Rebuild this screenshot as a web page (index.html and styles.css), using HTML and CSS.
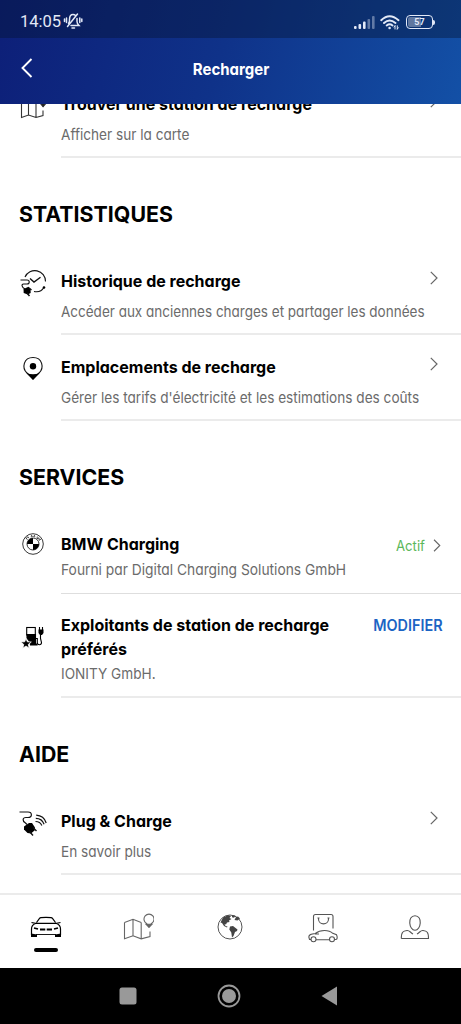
FILE: index.html
```html
<!DOCTYPE html>
<html lang="fr">
<head>
<meta charset="utf-8">
<title>Recharger</title>
<link rel="stylesheet" href="styles.css">
</head>
<body>
<div class="app">
  <header class="top">
    <div class="status">
      <span class="clock">14:05</span>
      <svg class="bell" width="20" height="18" viewBox="0 0 20 18" fill="none" stroke="currentColor" stroke-width="1.500" stroke-linecap="round">
        <path d="M5.500 11.500c.7-1 1-2 1-3V7.500C6.500 4 8 2.500 10 2.500c1 0 1.900.4 2.500 1M14 6.500v3c0 1.500.8 2.700 2 4H8M4.500 14.500L14.500 2M9 16h2.500M3.500 6v4.500M1.500 7v2.500M16.800 6v4.500M18.800 7v2.500"/>
      </svg>
      <span class="spacer"></span>
      <svg class="signal" width="21" height="13" viewBox="0 0 21 13" fill="currentColor">
        <rect x="0" y="10" width="2.600" height="3" rx="1"/><rect x="4.500" y="8" width="2.600" height="5" rx="1"/><rect x="9" y="5.500" width="2.600" height="7.500" rx="1"/>
        <g opacity=".4"><rect x="13.500" y="3" width="2.600" height="10" rx="1"/><rect x="18" y="0" width="2.600" height="13" rx="1"/></g>
      </svg>
      <svg class="wifi" width="20" height="15" viewBox="0 0 20 15" fill="none" stroke="currentColor" stroke-width="1.900" stroke-linecap="round">
        <path d="M1.200 5.200Q9.500-2.800 18.500 5.200M4 8Q9.500 2.800 15.500 8M6.700 10.500Q9.700 8.200 12.500 10.500"/>
        <circle cx="9.600" cy="13" r="1.300" fill="currentColor" stroke="none"/>
        <path stroke-width="1" d="M15 14v-3.200M14 12l1-1.200M17.300 10.800V14M17.300 14l1-1.200"/>
      </svg>
      <span class="battery"><span class="level">57</span></span><span class="nub"></span>
    </div>
    <div class="titlebar">
      <svg class="back" width="12" height="20" viewBox="0 0 12 20" fill="none" stroke="currentColor" stroke-width="1.900"><path d="M10.500 1L1.500 10l9 9"/></svg>
      <h1><span class="fit">Recharger</span></h1>
    </div>
  </header>

  <main class="content">
    <div class="list">
      <section class="row">
        <svg class="icon" width="30" height="30" viewBox="0 0 30 30" fill="none" stroke="#333" stroke-width="1.100">
          <path d="M3.500 8.500l7-2.500 7.500 2.500M3.500 8.500v18l7-2.500 7.500 2.500 7-2v-5M10.500 6V24M18 8.500v18"/><path d="M23 11a4 4 0 1 1 4 0l-2 4z"/><path fill="#111" d="M22.800 13h4.600l-2.300 2.700z"/>
        </svg>
        <div class="body"><div class="text"><h3><span class="fit">Trouver une station de recharge</span></h3><p><span class="fit">Afficher sur la carte</span></p></div>
        <svg class="chev" width="8" height="14" viewBox="0 0 8 14"><path d="M.800.800L7 7 .800 13.200"/></svg></div>
      </section>

      <h2><span class="fit">STATISTIQUES</span></h2>
      <section class="row">
        <svg class="icon" width="30" height="30" viewBox="0 0 30 30" fill="none" stroke="#111" stroke-width="1.100">
          <path d="M7 9A10.700 10.700 0 0 1 27.500 13.500M16 23.500c4.500 1 8-.8 9.800-4"/><path stroke-width="1.400" d="M12 10.500l4 3.500 6.500-4.700"/>
          <path d="M2.500 12H9c3 0 3 4 0 4H5.500c-2.300 0-2 3.500 1.500 5"/><path fill="#000" stroke="none" d="M5.500 21l5-2.200 2 2.200.2 4-3 1.500-4-1.500z"/><path stroke-width="1.500" d="M11 20l2.500 2M9 25l2.500 3"/><circle cx="26" cy="19.500" r="1.300" fill="#000" stroke="none"/>
        </svg>
        <div class="body"><div class="text"><h3><span class="fit">Historique de recharge</span></h3><p><span class="fit long">Accéder aux anciennes charges et partager les données</span></p></div>
        <svg class="chev" width="8" height="14" viewBox="0 0 8 14"><path d="M.800.800L7 7 .800 13.200"/></svg></div>
      </section>
      <section class="row">
        <svg class="icon" width="30" height="30" viewBox="0 0 30 30" fill="none" stroke="#111" stroke-width="1.100">
          <path d="M9 19C3.500 14 5.500 3.500 15 3.500S26.500 14 21 19l-6 6z"/><path fill="#000" stroke="none" d="M8.500 19q6.500 2.500 13 0L15 26z"/><circle cx="15" cy="12.300" r="3.200" fill="#000" stroke="none"/>
        </svg>
        <div class="body"><div class="text"><h3><span class="fit">Emplacements de recharge</span></h3><p><span class="fit">Gérer les tarifs d'électricité et les estimations des coûts</span></p></div>
        <svg class="chev" width="8" height="14" viewBox="0 0 8 14"><path d="M.800.800L7 7 .800 13.200"/></svg></div>
      </section>

      <h2><span class="fit">SERVICES</span></h2>
      <section class="row row-service">
        <svg class="icon" width="30" height="30" viewBox="0 0 30 30" fill="none" stroke="#222" stroke-width=".9">
          <circle cx="15" cy="15" r="10.300"/><circle cx="15" cy="15" r="6"/>
          <path fill="#000" stroke="none" d="M15 15V9a6 6 0 0 0-6 6zM15 15v6a6 6 0 0 0 6-6z"/>
          <path stroke-width=".8" d="M8 9.500l2-1.800.8 1.500M7.500 8.500l2 2.300M13.200 8.300l.3-2 1.500 1.500 1.500-1.500.3 2M19.300 7.500l-.3 2.300 2-1 .2 2.500 1.800-1.200"/>
        </svg>
        <div class="body"><div class="text"><h3><span class="fit">BMW Charging</span></h3><p><span class="fit wide">Fourni par Digital Charging Solutions GmbH</span></p></div>
        <div class="state"><span class="fit">Actif</span><svg width="8" height="13" viewBox="0 0 8 14"><path d="M.800.800L7 7 .800 13.200"/></svg></div></div>
      </section>
      <section class="row row-operators">
        <svg class="icon" width="30" height="30" viewBox="0 0 30 30" fill="none" stroke="#000" stroke-width="1.100">
          <rect x="8.700" y="5.500" width="8.600" height="7.500"/><path fill="#000" d="M9 12.500h8.500V22h1.500v1h-6.500l-.5-3-3-4z"/><path d="M18 16.500h1.300v4c0 3 4.200 3 4.200 0l-1-4V12"/><path fill="#000" stroke="none" d="M20.500 7.500h5V11l-1.500 2h-2l-1.500-2z"/><path d="M21.500 5v3M24.500 5v3"/>
          <path fill="#000" stroke="#fff" stroke-width=".8" d="M8 16.500l1.300 3.300 4 .2-3.100 2.500 1.100 3.700L8 24l-3.300 2.200 1.100-3.700L2.700 20l4-.2z"/>
        </svg>
        <div class="body"><div class="text"><h3><span class="fit">Exploitants de station de recharge<br>préférés</span></h3><p><span class="fit">IONITY GmbH.</span></p></div>
        <span class="action"><span class="fit">MODIFIER</span></span></div>
      </section>

      <h2><span class="fit">AIDE</span></h2>
      <section class="row">
        <svg class="icon" width="30" height="30" viewBox="0 0 30 30" fill="none" stroke="#111" stroke-width="1.200">
          <path d="M1.500 4H10c4.500 0 4.500 5.500 0 5.500H8c-3.500 0-4 3.500-.5 5.500l1.500 1.500"/><path fill="#000" stroke="none" d="M6 18.500l5-3.500h3l3 4.500-.5 3-3.500 3-3.500-.5-3.500-3.500z"/><path stroke-width="1.400" d="M15 19.500l3.500 3.500M11.500 23.500l3.500 4"/>
          <path d="M17.500 13.500c3 0 5.300 1.500 6.300 4M17.800 10.300c4 0 7 2.200 8.300 6M18.200 7.200c5 .3 8.500 3 10 7.800"/>
        </svg>
        <div class="body"><div class="text"><h3><span class="fit">Plug &amp; Charge</span></h3><p><span class="fit">En savoir plus</span></p></div>
        <svg class="chev" width="8" height="14" viewBox="0 0 8 14"><path d="M.800.800L7 7 .800 13.200"/></svg></div>
      </section>
    </div>
  </main>

  <nav class="tabs">
    <div class="tab tab-on">
      <svg width="32" height="32" viewBox="0 0 32 32" fill="none" stroke="#000" stroke-width="1.200">
        <path d="M6.500 11.500l3-4.200Q10 6.700 11 6.600q5-.5 10 0 1 .1 1.500.7l3 4.200M1.500 11.500l4 .8M30.500 11.500l-4 .8M5.500 12.300H26.500M5.500 12.500Q1.500 14 1.500 18v6M26.500 12.500q4 1.500 4 5.500v6"/>
        <path stroke-width=".9" d="M6 23.500h20"/><path stroke-width="1.800" d="M4 17l4 1M10 18.500h5.300M16.700 18.500H22M28 17l-4 1"/><path fill="#000" stroke="none" d="M1 22.500l6 1V26H1zM31 22.500l-6 1V26h6z"/>
      </svg><i></i>
    </div>
    <div class="tab">
      <svg width="32" height="32" viewBox="0 0 32 32" fill="none" stroke="#666" stroke-width="1.100">
        <path d="M2.500 11.500l8.500-3.200 8.200 3.200M2.500 11.500v16.300l8.500-3 8.200 3 8.800-2.300v-5M11 8.300v16.500M19.200 11.500v16.300"/><path d="M24.500 12.500a5 5 0 1 1 5 0L27 16z"/><path fill="#666" d="M24 13.200h6L27 16.300z"/>
      </svg>
    </div>
    <div class="tab">
      <svg width="32" height="32" viewBox="0 0 32 32" fill="none" stroke="#555" stroke-width="1">
        <circle cx="16" cy="16" r="12"/><path fill="#444" stroke="none" d="M9 6.500l5-2.300 3 .8-1.500 2 2 1-2.500 1.500.5 1.500-2.500.5-1 2-1.500-.5 1 2 2 .5-.5 1-3-1.500-2-3-1.500-.5zM18 4.200l3.500.5-1.500 2-2-.5zM22 6l2-.5 2 2-2.500 2-3-.5zM16 15.500l3-.5 4.500 3.500-.5 1.500-2 1-1.500 4-1.500 1.500-.7-5-2-3z"/>
      </svg>
    </div>
    <div class="tab">
      <svg width="32" height="32" viewBox="0 0 32 32" fill="none" stroke="#555" stroke-width="1.100">
        <path d="M6.500 19.500V5.500c0-1.300.7-2 2-2H24c1.300 0 2 .7 2 2v12M11.500 7v1c0 6.500 10 6.500 10 0V7M10.500 7h2M20.500 7h2"/>
        <path d="M4 28.500H2.500l-.7-2.500c0-2.500 2-3 6.500-3.500 5-4 13.500-4 17.500-.2l3.700 1.500c1 2 1 4.700-.5 4.700h-1.500M9 28.700h13.500M8 23h4"/><circle cx="6.500" cy="28.300" r="2.500"/><circle cx="25" cy="28.300" r="2.500"/>
      </svg>
    </div>
    <div class="tab">
      <svg width="32" height="32" viewBox="0 0 32 32" fill="none" stroke="#555" stroke-width="1.100">
        <path d="M16 4.700c-8 0-6 14.500 0 14.500s8-14.500 0-14.500zM2.300 27.500H29.500c0-6.500-1.500-7.500-5.500-8-2.500-.3-3 1.800-6 3.500M14 23c-3-1.700-3.500-3.800-6-3.500-4 .5-5.700 1.500-5.700 8"/>
      </svg>
    </div>
  </nav>

  <footer class="system">
    <svg width="18" height="18" viewBox="0 0 18 18"><rect x=".5" y=".5" width="17" height="17" rx="2.500"/></svg>
    <svg width="24" height="24" viewBox="0 0 24 24"><circle cx="12" cy="12" r="10.500" fill="none" stroke="#999" stroke-width="1.800"/><circle cx="12" cy="12" r="7"/></svg>
    <svg width="17" height="20" viewBox="0 0 17 20"><path d="M16 .5v19L.5 10z"/></svg>
  </footer>
</div>
</body>
</html>
```
FILE: styles.css
```css
* { box-sizing: border-box; }
body { margin: 0; background: #fff; font-family: Inter, Roboto, sans-serif; font-feature-settings: "cv11"; color: #000; }
h1, h2, h3, p { margin: 0; }
svg { display: block; flex: none; }
.app { display: flex; flex-direction: column; width: 461px; height: 1024px; overflow: hidden; }
.fit { display: inline-block; white-space: nowrap; transform: scaleX(.908); transform-origin: left center; }
.fit.long { transform: scaleX(.9); }
.fit.wide { transform: scaleX(.92); }

.top { height: 104px; color: #fff; background: linear-gradient(105deg, #0d1f78 0%, #0f3289 48%, #1350a6 100%); }
.status { display: flex; align-items: center; height: 38px; padding: 6px 26px 0 20px; background: rgba(6, 20, 50, .4); color: #e3e9f7; }
.clock { font: 400 16.5px/20px Roboto, sans-serif; width: 43px; }
.bell { margin-top: -2px; }
.spacer { flex: 1; }
.wifi { margin-left: 5px; }
.battery { display: flex; width: 27px; height: 14px; margin-left: 6px; border: 1.5px solid #e3e9f7; border-radius: 4px; padding: 1px; }
.nub { width: 2px; height: 5px; border-radius: 0 2px 2px 0; background: #e3e9f7; }
.level { flex: 1; font: 700 9px/10px Roboto, sans-serif; text-align: center; border-radius: 2px; background: linear-gradient(90deg, #60779f 55%, transparent 55%); }
.titlebar { display: flex; align-items: center; height: 66px; padding: 0 22px 6px 21px; }
.titlebar h1 { flex: 1; text-align: center; font-size: 16.5px; font-weight: 700; line-height: 24px; padding: 2px 10px 0 0; }
.titlebar .fit { transform-origin: center; }

.content { height: 789px; overflow: hidden; }
.list { margin-top: -32px; }
h2 { height: 91px; padding: 42px 0 0 19px; font-size: 22px; line-height: 28px; font-weight: 650; }
h2 .fit, h3 .fit { transform: scaleX(.97); }
.row { display: flex; height: 86px; padding-left: 18px; }
.icon { margin: 19px 13px 0 0; }
.body { flex: 1; display: flex; justify-content: space-between; border-bottom: 2px solid #ebebeb; padding-right: 23px; }
.text { padding-top: 20px; width: 272px; }
h3 { font-size: 16.5px; line-height: 24px; font-weight: 700; }
.text p { margin-top: 9px; font-size: 15px; line-height: 20px; color: #6b6b6b; }
.chev { margin-top: 22px; }
.chev path, .state path { fill: none; stroke: #666; stroke-width: 1.2; }
.row-service { height: 82px; }
.row-service .body { border-bottom: 1px solid #dedede; }
.row-service .icon { margin-top: 17px; }
.row-service .text p { margin-top: 4px; }
.state { display: flex; gap: 5px; height: 24px; margin-top: 21px; align-items: center; color: #5cb85a; font-size: 14.5px; margin-right: -3px; }
.row-operators { height: 104px; }
.row-operators .icon { margin-top: 28px; }
.row-operators .text { padding-top: 19px; }
.row-operators .text p { margin-top: 3px; }
.action { margin: 20px -5px 0 0; font-size: 15.5px; line-height: 24px; font-weight: 600; color: #1c64c4; }
.action .fit { transform: scaleX(.93); transform-origin: right center; }

.tabs { display: grid; grid-template-columns: repeat(5, 1fr); height: 75px; border-top: 2px solid #ebebeb; }
.tab { display: flex; flex-direction: column; align-items: center; padding-top: 16px; }
.tab i { width: 24px; height: 4px; margin-top: 5px; background: #000; border-radius: 2px; }
.system { display: flex; align-items: center; height: 56px; padding-left: 119px; background: #000; fill: #999; }
.system svg + svg { margin-left: 80px; }
```
